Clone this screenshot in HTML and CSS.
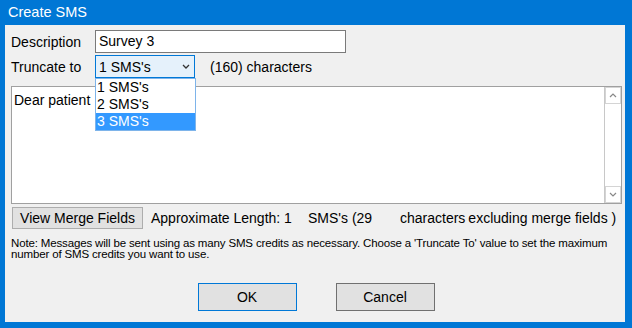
FILE: index.html
```html
<!DOCTYPE html>
<html lang="en">

<head>
  <meta charset="UTF-8">
  <meta name="viewport" content="width=device-width, initial-scale=1.0">
  <title>Create SMS</title>

  <link rel="stylesheet" href="styles.css">
</head>

<body>
  <main class="window">
    <header class="title-bar">Create SMS</header>

    <section class="panel">
      <div class="row">
        <label class="label">Description</label>
        <div class="text-input">Survey 3</div>
      </div>

      <div class="row">
        <label class="label">Truncate to</label>
        <div class="combo">
          <div class="select">
            <span>1 SMS's</span>
            <svg class="chevron" width="8" height="5" viewBox="0 0 8 5">
              <path d="M1 1 L4 4 L7 1" fill="none" stroke="#333" stroke-width="1.3" />
            </svg>
          </div>
          <ul class="options">
            <li>1 SMS's</li>
            <li>2 SMS's</li>
            <li class="selected">3 SMS's</li>
          </ul>
        </div>
        <span class="chars">(160) characters</span>
      </div>

      <div class="message">
        <div class="message-text">Dear patient</div>
        <div class="scrollbar">
          <div class="arrow">
            <svg width="8" height="5" viewBox="0 0 8 5">
              <path d="M1 4 L4 1 L7 4" fill="none" stroke="#888" stroke-width="1.2" />
            </svg>
          </div>
          <div class="arrow">
            <svg width="8" height="5" viewBox="0 0 8 5">
              <path d="M1 1 L4 4 L7 1" fill="none" stroke="#888" stroke-width="1.2" />
            </svg>
          </div>
        </div>
      </div>

      <div class="length-row">
        <button class="merge-btn">View Merge Fields</button>
        <span class="approx">Approximate Length:&nbsp;1</span>
        <span class="sms-count">SMS's (29</span>
        <span>characters</span>
        <span class="excluding">excluding merge fields )</span>
      </div>

      <p class="note">Note: Messages will be sent using as many SMS credits as necessary. Choose a 'Truncate To' value to set the maximum number of SMS credits you want to use.</p>

      <div class="actions">
        <button class="dlg-btn default">OK</button>
        <button class="dlg-btn">Cancel</button>
      </div>
    </section>
  </main>
</body>

</html>
```

FILE: styles.css
```css
* {
  box-sizing: border-box;
}

body {
  background: #0077d5;
  color: #000;
  font-family: "Liberation Sans", Arial, sans-serif;
  font-size: 14px;
  height: 328px;
  margin: 0;
  overflow: hidden;
  width: 632px;
}

.title-bar {
  color: #fff;
  font-size: 14.5px;
  height: 25px;
  line-height: 24px;
  padding-left: 8px;
}

.panel {
  background: #f0f0f0;
  display: flex;
  flex-direction: column;
  height: 297px;
  margin: 0 7px 0 5px;
  padding: 5px 0 0 6px;
}

.row {
  align-items: center;
  display: flex;
  height: 23px;
  margin-bottom: 2px;
}

.label {
  width: 84px;
}

.text-input {
  background: #fff;
  border: 1px solid #7a7a7a;
  height: 23px;
  line-height: 21px;
  padding-left: 3px;
  width: 251px;
}

.combo {
  position: relative;
}

.select {
  align-items: center;
  background: #e5f1fb;
  border: 1px solid #0078d7;
  display: flex;
  height: 23px;
  justify-content: space-between;
  padding: 0 4px 0 3px;
  width: 100px;
}

.options {
  background: #fff;
  border: 1px solid #7eb4ea;
  left: 0;
  list-style: none;
  margin: 0;
  padding: 0;
  position: absolute;
  top: 23px;
  width: 101px;
  z-index: 2;
}

.options li {
  height: 17px;
  line-height: 17px;
  padding-left: 1px;
}

.options .selected {
  background: #3399ff;
  color: #fff;
}

.chars {
  margin-left: 15px;
}

.message {
  background: #fff;
  border: 1px solid #a0a0a0;
  display: flex;
  height: 118px;
  margin-top: 6px;
  width: 611px;
}

.message-text {
  flex: 1;
  padding: 5px 0 0 2px;
}

.scrollbar {
  background: #fff;
  border-left: 1px solid #c8c8c8;
  display: flex;
  flex-direction: column;
  justify-content: space-between;
  width: 17px;
}

.arrow {
  align-items: center;
  border: 1px solid #d4d4d4;
  display: flex;
  height: 17px;
  justify-content: center;
}

.length-row {
  align-items: center;
  display: flex;
  height: 23px;
  margin-top: 2px;
}

.merge-btn {
  background: #e1e1e1;
  border: 1px solid #adadad;
  font-family: inherit;
  font-size: 14px;
  height: 22px;
  margin: 0 8px 0 1px;
  padding: 0;
  width: 131px;
}

.approx {
  width: 157px;
}

.sms-count {
  width: 92px;
}

.excluding {
  margin-left: 3px;
}

.note {
  font-size: 11.5px;
  letter-spacing: -0.15px;
  line-height: 11px;
  margin: 9px 0 0;
  width: 608px;
}

.actions {
  column-gap: 39px;
  display: flex;
  justify-content: center;
  margin-top: 23px;
  padding-right: 4px;
}

.dlg-btn {
  background: #e1e1e1;
  border: 1px solid #707070;
  font-family: inherit;
  font-size: 14px;
  height: 28px;
  width: 99px;
}

.dlg-btn.default {
  border: 1px solid #0078d7;
  box-shadow: inset 0 0 0 1px #e1e1e1;
}
```
